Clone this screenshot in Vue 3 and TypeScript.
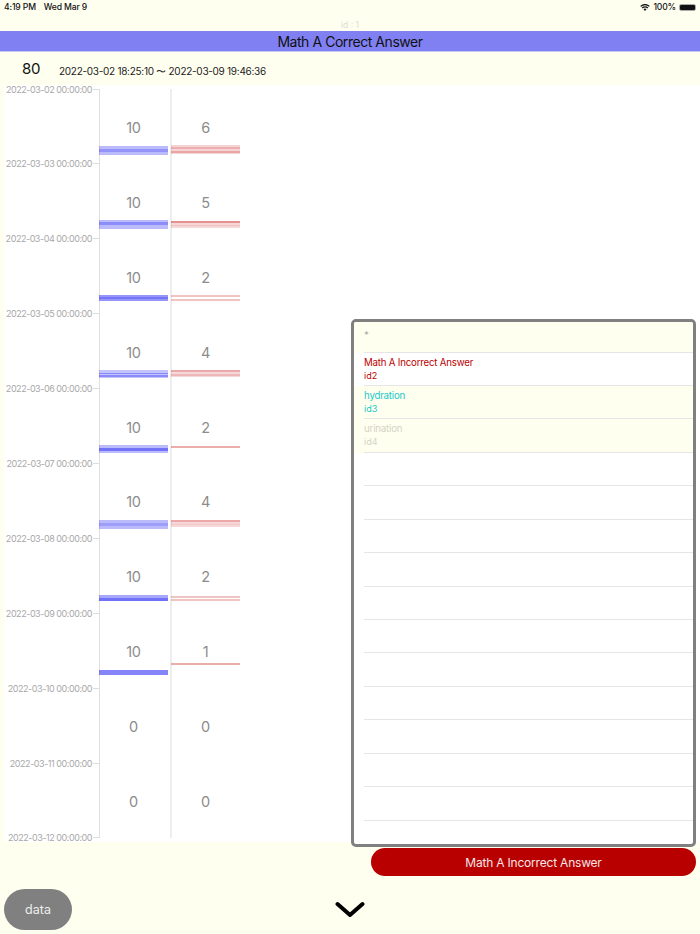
<script setup lang="ts">
interface Line { y: number; h: number; o: number }
interface Day { label: string; a: number; b: number; blue: Line[]; red: Line[] }

const band = (top: number, spec: [number, number, number][]): Line[] =>
  spec.map(([y, h, o]) => ({ y: top + y, h, o }))

const days: Day[] = [
  { label: '2022-03-02 00:00:00', a: 10, b: 6,
    blue: band(57, [[0, 9, 0.32], [3, 3, 0.28]]),
    red: band(56, [[0, 9, 0.22], [2, 2, 0.25], [6, 2, 0.3]]) },
  { label: '2022-03-03 00:00:00', a: 10, b: 5,
    blue: band(56, [[0, 9, 0.32], [2, 3, 0.32]]),
    red: band(57, [[0, 7, 0.2], [0, 2, 0.45], [4, 1, 0.15]]) },
  { label: '2022-03-04 00:00:00', a: 10, b: 2,
    blue: band(56, [[0, 6, 0.5], [2, 2, 0.3]]),
    red: band(56, [[0, 2, 0.3], [4, 2, 0.3]]) },
  { label: '2022-03-05 00:00:00', a: 10, b: 4,
    blue: band(56, [[0, 8, 0.28], [3, 1, 0.38], [5, 2, 0.38]]),
    red: band(56, [[0, 7, 0.2], [0, 2, 0.3], [4, 2, 0.2]]) },
  { label: '2022-03-06 00:00:00', a: 10, b: 2,
    blue: band(56, [[0, 8, 0.32], [3, 3, 0.5]]),
    red: band(57, [[0, 2, 0.42]]) },
  { label: '2022-03-07 00:00:00', a: 10, b: 4,
    blue: band(57, [[0, 9, 0.32], [3, 3, 0.2]]),
    red: band(57, [[0, 7, 0.2], [0, 2, 0.3], [4, 1, 0.1]]) },
  { label: '2022-03-08 00:00:00', a: 10, b: 2,
    blue: band(57, [[0, 6, 0.42], [3, 3, 0.42]]),
    red: band(58, [[0, 2, 0.3], [3, 2, 0.3]]) },
  { label: '2022-03-09 00:00:00', a: 10, b: 1,
    blue: band(57, [[0, 5, 0.58]]),
    red: band(50, [[0, 2, 0.42]]) },
  { label: '2022-03-10 00:00:00', a: 0, b: 0, blue: [], red: [] },
  { label: '2022-03-11 00:00:00', a: 0, b: 0, blue: [], red: [] },
]

const rows = [
  { title: '*', sub: '', tone: 'first' },
  { title: 'Math A Incorrect Answer', sub: 'id2', tone: 'red' },
  { title: 'hydration', sub: 'id3', tone: 'teal' },
  { title: 'urination', sub: 'id4', tone: 'pale' },
  ...Array.from({ length: 12 }, () => ({ title: '', sub: '', tone: 'empty' })),
]
</script>

<template>
  <div class="page">
    <div class="status">
      <span class="status-left"><span>4:19 PM</span><span>Wed Mar 9</span></span>
      <span class="status-right">
        <svg class="wifi" width="10" height="7" viewBox="0 0 14 10">
          <path d="M0.8 3.4a8.8 8.8 0 0 1 12.4 0M3 5.7a5.6 5.6 0 0 1 8 0" fill="none" stroke="#111" stroke-width="1.9"/>
          <path d="M4.9 7.6a3 3 0 0 1 4.2 0L7 9.9Z" fill="#111"/>
        </svg>
        <span>100%</span>
        <span class="battery"><span class="battery-fill"></span></span>
      </span>
    </div>
    <div class="idline">id : 1</div>
    <div class="title">Math A Correct Answer</div>
    <div class="summary">
      <span class="count">80</span>
      <span class="range">2022-03-02 18:25:10 〜 2022-03-09 19:46:36</span>
    </div>

    <div class="main">
      <div class="chart">
        <div v-for="d in days" :key="d.label" class="day">
          <div class="stamp"><span>{{ d.label }}</span><i class="tick"></i></div>
          <div class="cell">
            <span class="val">{{ d.a }}</span>
            <i v-for="(l, i) in d.blue" :key="i" class="mark blue" :style="{ top: l.y + 'px', height: l.h + 'px', opacity: l.o }"></i>
          </div>
          <div class="cell second">
            <span class="val">{{ d.b }}</span>
            <i v-for="(l, i) in d.red" :key="i" class="mark red" :style="{ top: l.y + 'px', height: l.h + 'px', opacity: l.o }"></i>
          </div>
        </div>
        <div class="end">
          <div class="stamp"><span>2022-03-12 00:00:00</span><i class="tick"></i></div>
        </div>
      </div>
    </div>

    <div class="panel">
      <div v-for="(r, i) in rows" :key="i" class="row" :class="r.tone">
        <div class="row-title">{{ r.title }}</div>
        <div class="row-sub">{{ r.sub }}</div>
      </div>
    </div>

    <div class="foot">
      <button class="data">data</button>
      <svg class="chev" width="30" height="17" viewBox="0 0 30 17">
        <path d="M2.5 3 15 14 27.5 3" fill="none" stroke="#000" stroke-width="4" stroke-linecap="round" stroke-linejoin="round"/>
      </svg>
      <button class="incorrect">Math A Incorrect Answer</button>
    </div>
  </div>
</template>

<style>
html, body { margin: 0; background: #fffff0; }
</style>

<style scoped>
.page {
  position: relative;
  width: 700px;
  height: 934px;
  overflow: hidden;
  background: #fffff0;
  font-family: Inter, "Liberation Sans", sans-serif;
  color: #111;
}
.status {
  height: 14px;
  margin-bottom: 4px;
  padding: 0 4px 0 4px;
  display: flex;
  justify-content: space-between;
  align-items: center;
  font-size: 8.6px;
  letter-spacing: -0.15px;
  font-weight: 500;
}
.status-left { display: flex; gap: 8px; }
.status-right { display: flex; align-items: center; gap: 3px; }
.battery {
  width: 17px;
  height: 7px;
  border: 1px solid #aaa;
  border-radius: 2px;
  box-sizing: border-box;
  display: flex;
}
.battery-fill { flex: 1; background: #111; border-radius: 1px; }
.idline {
  height: 13px;
  line-height: 14px;
  text-align: center;
  font-size: 8.5px;
  color: #dcdcd2;
}
.title {
  height: 20px;
  line-height: 21px;
  background: #8080f2;
  border-bottom: 1px solid #c7c7f5;
  text-align: center;
  font-size: 14px;
  letter-spacing: -0.45px;
}
.summary {
  height: 33px;
  display: flex;
  align-items: center;
}
.count { width: 59px; padding-left: 22px; box-sizing: border-box; font-size: 15px; letter-spacing: -0.3px; }
.range { font-size: 10px; letter-spacing: -0.28px; color: #222; padding-top: 6px; }
.main {
  background: #fff;
  margin-left: 4px;
  height: 757px;
  padding-top: 4px;
  box-sizing: border-box;
}
.chart { display: flex; flex-direction: column; }
.day { display: grid; grid-template-columns: 95px 72px 72px; height: 74.9px; }
.end { height: 0; display: grid; grid-template-columns: 95px; }
.stamp {
  height: 0;
  display: flex;
  align-items: center;
  justify-content: flex-end;
  gap: 1px;
  font-size: 9px;
  letter-spacing: -0.45px;
  color: #a8a8a8;
  white-space: nowrap;
}
.tick { width: 6px; height: 1px; background: #ddd; flex: none; }
.cell {
  position: relative;
  border-left: 1px solid #e0e0e4;
  box-sizing: border-box;
  display: flex;
  justify-content: center;
  padding-top: 30px;
  padding-right: 4px;
}
.second { margin-left: -1px; border-left: 2px solid #eeeef0; }
.val { font-size: 14.5px; line-height: 18px; letter-spacing: -0.3px; color: #8c8c8c; }
.mark { position: absolute; left: -1px; width: 69px; }
.blue { background: #2c2cf5; }
.red { background: #d23c3c; }
.panel {
  position: absolute;
  left: 351px;
  top: 319px;
  width: 345px;
  height: 528px;
  box-sizing: border-box;
  border: 3px solid #808080;
  border-radius: 5px;
  background: #fff;
  overflow: hidden;
}
.row {
  height: 33.45px;
  box-sizing: border-box;
  padding: 3px 0 0 10px;
  position: relative;
  font-size: 9.7px;
  line-height: 13px;
  letter-spacing: -0.2px;
}
.row::after {
  content: '';
  position: absolute;
  left: 10px;
  right: 0;
  bottom: 0;
  height: 1px;
  background: #e6e6e6;
}
.row-sub { font-size: 9px; letter-spacing: 0; }
.first, .teal, .pale { background: #fffff0; }
.first { height: 30.5px; padding-top: 7px; color: #aaa; }
.red.row { color: #bb0000; background: #fff; }
.teal { color: #18c8c8; }
.pale { color: #d4d4c4; }
.foot {
  position: absolute;
  left: 0;
  right: 0;
  top: 848px;
  bottom: 0;
}
button { border: 0; font: inherit; padding: 0; display: block; }
.data {
  position: absolute;
  left: 4px;
  top: 41px;
  width: 68px;
  height: 41px;
  border-radius: 21px;
  background: #808080;
  color: #eee;
  font-size: 12.5px;
}
.chev { position: absolute; left: 335px; top: 53px; }
.incorrect {
  position: absolute;
  left: 371px;
  top: 0;
  width: 325px;
  height: 28px;
  border-radius: 14px;
  background: #b80000;
  color: #f5e6e6;
  font-size: 12px;
  letter-spacing: -0.2px;
}
</style>
